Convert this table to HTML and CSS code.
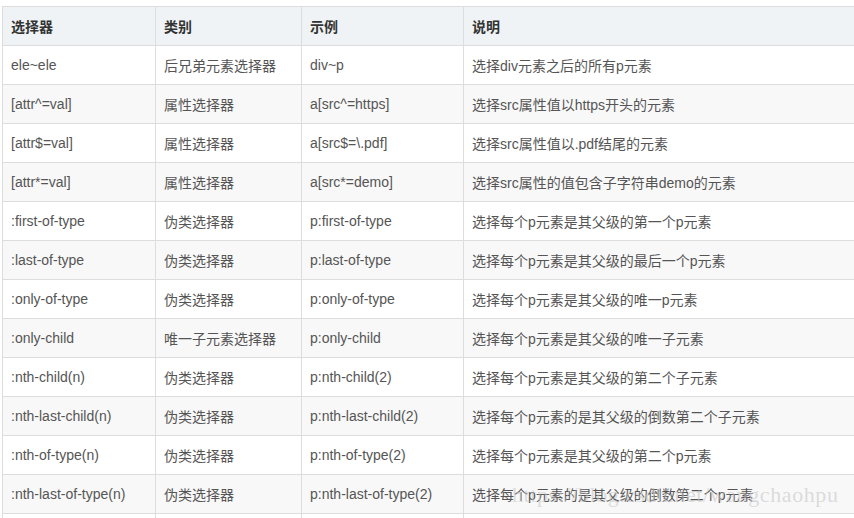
FILE: index.html
```html
<!DOCTYPE html>
<html lang="zh-CN">
<head>
<meta charset="utf-8">
<title>CSS选择器</title>
<link rel="stylesheet" href="styles.css">
</head>
<body>
<div class="page">
  <table class="sel-table">
    <colgroup>
      <col class="c1"><col class="c2"><col class="c3"><col class="c4">
    </colgroup>
    <thead>
      <tr><th>选择器</th><th>类别</th><th>示例</th><th>说明</th></tr>
    </thead>
    <tbody>
      <tr><td>ele~ele</td><td>后兄弟元素选择器</td><td>div~p</td><td>选择div元素之后的所有p元素</td></tr>
      <tr><td>[attr^=val]</td><td>属性选择器</td><td>a[src^=https]</td><td>选择src属性值以https开头的元素</td></tr>
      <tr><td>[attr$=val]</td><td>属性选择器</td><td>a[src$=\.pdf]</td><td>选择src属性值以.pdf结尾的元素</td></tr>
      <tr><td>[attr*=val]</td><td>属性选择器</td><td>a[src*=demo]</td><td>选择src属性的值包含子字符串demo的元素</td></tr>
      <tr><td>:first-of-type</td><td>伪类选择器</td><td>p:first-of-type</td><td>选择每个p元素是其父级的第一个p元素</td></tr>
      <tr><td>:last-of-type</td><td>伪类选择器</td><td>p:last-of-type</td><td>选择每个p元素是其父级的最后一个p元素</td></tr>
      <tr><td>:only-of-type</td><td>伪类选择器</td><td>p:only-of-type</td><td>选择每个p元素是其父级的唯一p元素</td></tr>
      <tr><td>:only-child</td><td>唯一子元素选择器</td><td>p:only-child</td><td>选择每个p元素是其父级的唯一子元素</td></tr>
      <tr><td>:nth-child(n)</td><td>伪类选择器</td><td>p:nth-child(2)</td><td>选择每个p元素是其父级的第二个子元素</td></tr>
      <tr><td>:nth-last-child(n)</td><td>伪类选择器</td><td>p:nth-last-child(2)</td><td>选择每个p元素的是其父级的倒数第二个子元素</td></tr>
      <tr><td>:nth-of-type(n)</td><td>伪类选择器</td><td>p:nth-of-type(2)</td><td>选择每个p元素是其父级的第二个p元素</td></tr>
      <tr><td>:nth-last-of-type(n)</td><td>伪类选择器</td><td>p:nth-last-of-type(2)</td><td>选择每个p元素的是其父级的倒数第二个p元素</td></tr>
      <tr><td></td><td></td><td></td><td></td></tr>
    </tbody>
  </table>
  <div class="watermark">https://blog.csdn.net/wangchaohpu</div>
</div>
</body>
</html>
```

FILE: styles.css
```css
html, body {
  margin: 0;
  padding: 0;
  background: #ffffff;
  overflow: hidden;
}
.page {
  position: relative;
  width: 854px;
  height: 518px;
  padding: 6px 0 0 2px;
  box-sizing: border-box;
  overflow: hidden;
}
.sel-table {
  border-collapse: collapse;
  table-layout: fixed;
  width: 852px;
  font-family: "Liberation Sans", "Noto Sans CJK SC", sans-serif;
  font-size: 14px;
  color: #555555;
}
.c1 { width: 153px; }
.c2 { width: 146px; }
.c3 { width: 162px; }
.c4 { width: 391px; }
.sel-table th,
.sel-table td {
  border: 1px solid #dddddd;
  height: 39px;
  padding: 0 8px;
  box-sizing: border-box;
  text-align: left;
  vertical-align: middle;
  white-space: nowrap;
  overflow: hidden;
}
.sel-table th {
  background: #eff3f5;
  color: #333333;
  font-weight: bold;
}
.sel-table tbody tr:nth-child(even) td {
  background: #f8f8f8;
}
.watermark {
  position: absolute;
  left: 512px;
  top: 482px;
  font-family: "Liberation Serif", serif;
  font-size: 22px;
  letter-spacing: 0.6px;
  color: rgba(195, 195, 195, 0.55);
  white-space: nowrap;
  pointer-events: none;
}
```
